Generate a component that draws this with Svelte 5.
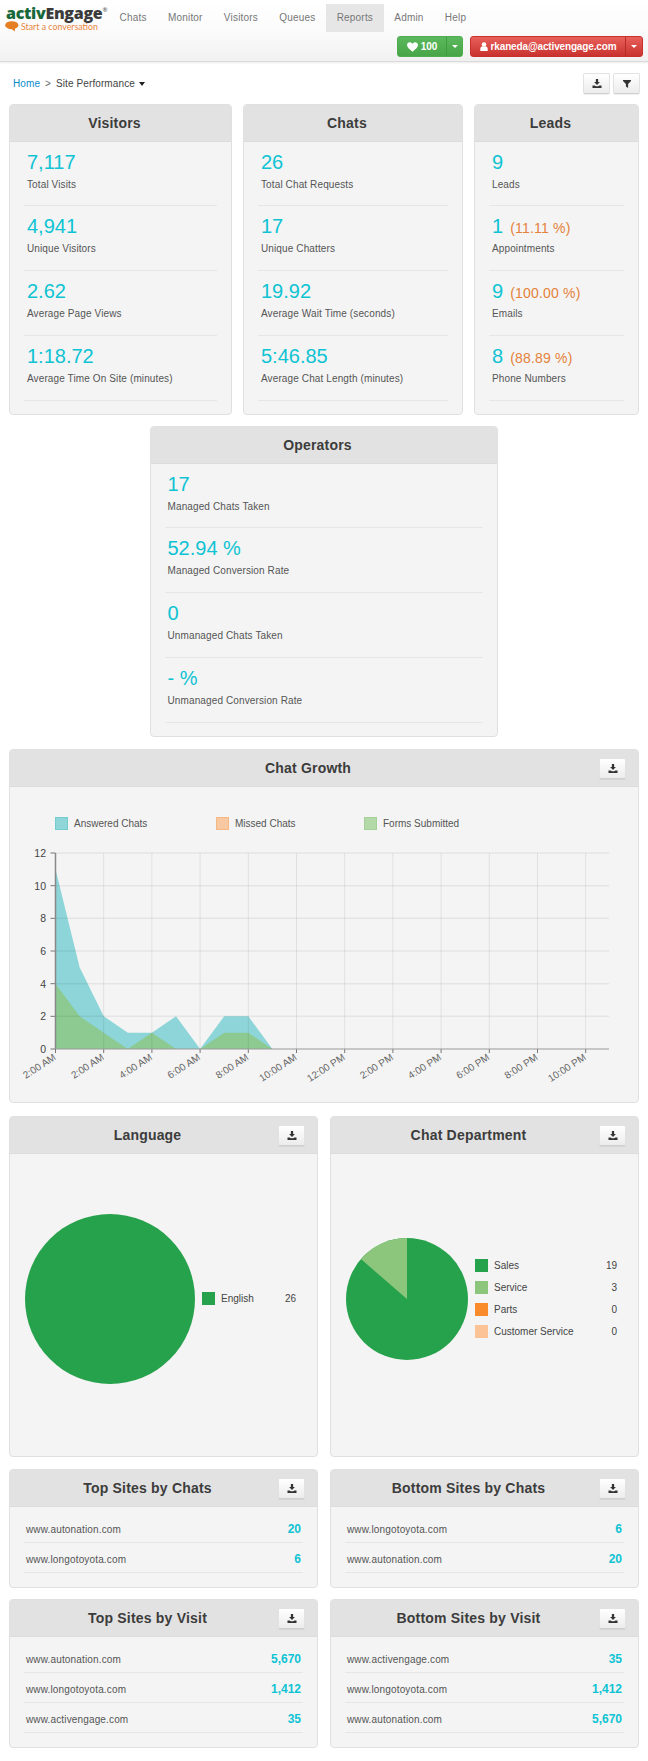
<script>
  const nav = ['Chats', 'Monitor', 'Visitors', 'Queues', 'Reports', 'Admin', 'Help'];

  const visitors = [
    { value: '7,117', label: 'Total Visits' },
    { value: '4,941', label: 'Unique Visitors' },
    { value: '2.62', label: 'Average Page Views' },
    { value: '1:18.72', label: 'Average Time On Site (minutes)' }
  ];
  const chats = [
    { value: '26', label: 'Total Chat Requests' },
    { value: '17', label: 'Unique Chatters' },
    { value: '19.92', label: 'Average Wait Time (seconds)' },
    { value: '5:46.85', label: 'Average Chat Length (minutes)' }
  ];
  const leads = [
    { value: '9', label: 'Leads' },
    { value: '1', pct: '(11.11 %)', label: 'Appointments' },
    { value: '9', pct: '(100.00 %)', label: 'Emails' },
    { value: '8', pct: '(88.89 %)', label: 'Phone Numbers' }
  ];
  const operators = [
    { value: '17', label: 'Managed Chats Taken' },
    { value: '52.94 %', label: 'Managed Conversion Rate' },
    { value: '0', label: 'Unmanaged Chats Taken' },
    { value: '- %', label: 'Unmanaged Conversion Rate' }
  ];
  const summary = [
    { title: 'Visitors', cls: 'w-visitors', items: visitors },
    { title: 'Chats', cls: 'w-chats', items: chats },
    { title: 'Leads', cls: 'w-leads', items: leads }
  ];

  const siteCards = [
    [
      { title: 'Top Sites by Chats', rows: [['www.autonation.com', '20'], ['www.longotoyota.com', '6']] },
      { title: 'Bottom Sites by Chats', rows: [['www.longotoyota.com', '6'], ['www.autonation.com', '20']] }
    ],
    [
      { title: 'Top Sites by Visit', rows: [['www.autonation.com', '5,670'], ['www.longotoyota.com', '1,412'], ['www.activengage.com', '35']] },
      { title: 'Bottom Sites by Visit', rows: [['www.activengage.com', '35'], ['www.longotoyota.com', '1,412'], ['www.autonation.com', '5,670']] }
    ]
  ];

  const departments = [
    { name: 'Sales', count: 19, color: '#27a24c' },
    { name: 'Service', count: 3, color: '#8cc67c' },
    { name: 'Parts', count: 0, color: '#f98b2c' },
    { name: 'Customer Service', count: 0, color: '#fcc496' }
  ];

  // chart geometry, in page coordinates
  const plot = { left: 55.5, right: 609, top: 853, bottom: 1049 };
  const stepX = 48.2;
  const stepY = (plot.bottom - plot.top) / 12;
  const yTicks = [0, 2, 4, 6, 8, 10, 12];
  const xLabels = ['2:00 AM', '2:00 AM', '4:00 AM', '6:00 AM', '8:00 AM', '10:00 AM', '12:00 PM', '2:00 PM', '4:00 PM', '6:00 PM', '8:00 PM', '10:00 PM'];
  const answered = [11, 5, 2, 1, 1, 2, 0, 2, 2, 0];
  const forms = [4, 2, 1, 0, 1, 0, 0, 1, 1, 0];

  const chartLegend = [
    { name: 'Answered Chats', x: 55, color: '#8fd6d8', edge: '#74ccd0' },
    { name: 'Missed Chats', x: 216, color: '#f8c8a0', edge: '#f6b883' },
    { name: 'Forms Submitted', x: 364, color: '#b3d9a9', edge: '#a3d198' }
  ];

  function area(data) {
    const pts = data.map((v, i) => `${plot.left + (i * stepX) / 2},${plot.bottom - v * stepY}`);
    return `${plot.left},${plot.bottom} ${pts.join(' ')}`;
  }
</script>

{#snippet downloadIcon()}
  <svg width="10" height="9" viewBox="0 0 13 12" aria-hidden="true">
    <path d="M5 0h3v4h2.400L6.500 8 2.600 4H5z" fill="#333" />
    <path d="M0.500 8.500h2.800l1.600 1.300h3.200l1.600-1.300h2.800V12H0.500z" fill="#333" />
  </svg>
{/snippet}

{#snippet cardHead(title, withButton)}
  <div class="card-head">
    <h2 class:shifted={withButton}>{title}</h2>
    {#if withButton}
      <button class="tool" aria-label="Download">{@render downloadIcon()}</button>
    {/if}
  </div>
{/snippet}

{#snippet statList(items)}
  <ul class="stats">
    {#each items as item}
      <li>
        <div class="stat-value">
          {item.value}{#if item.pct}<span class="pct">{item.pct}</span>{/if}
        </div>
        <div class="stat-label">{item.label}</div>
      </li>
    {/each}
  </ul>
{/snippet}

<header class="topbar">
  <div class="logo">
    <div class="logo-name"><span class="activ">activ</span>Engage<sup>®</sup></div>
    <div class="logo-tag">
      <svg width="14" height="11" viewBox="0 0 14 11" aria-hidden="true">
        <ellipse cx="6.800" cy="4.200" rx="6.600" ry="4" fill="#e67e22" />
        <path d="M6 7.500l4 0 0 3z" fill="#e67e22" />
      </svg>
      <span>Start a conversation</span>
    </div>
  </div>
  <div class="topbar-right">
    <nav>
      {#each nav as item}
        <span class="nav-item" class:active={item === 'Reports'}>{item}</span>
      {/each}
    </nav>
    <div class="account">
      <div class="split green">
        <span class="split-main">
          <svg width="11" height="10" viewBox="0 0 15 13" aria-hidden="true">
            <path d="M7.500 13C3 9.200 0 6.800 0 3.800 0 1.600 1.700 0 3.800 0c1.500 0 2.900.8 3.700 2.100C8.300.8 9.700 0 11.200 0 13.300 0 15 1.600 15 3.800c0 3-3 5.400-7.500 9.200z" fill="#fff" />
          </svg>
          100
        </span>
        <span class="split-caret"></span>
      </div>
      <div class="split red">
        <span class="split-main">
          <svg width="8" height="9" viewBox="0 0 9 11" aria-hidden="true">
            <circle cx="4.500" cy="3" r="2.800" fill="#fff" />
            <path d="M0 11V8.300C0 6.500 1.500 5.500 2.800 5.300c1 .7 2.400.7 3.400 0C7.500 5.500 9 6.500 9 8.300V11z" fill="#fff" />
          </svg>
          rkaneda@activengage.com
        </span>
        <span class="split-caret"></span>
      </div>
    </div>
  </div>
</header>

<main>
  <div class="toolbar">
    <div class="crumbs">
      <span class="home">Home</span><span class="sep">&gt;</span><span>Site Performance</span><span class="crumb-caret"></span>
    </div>
    <div class="tools">
      <button class="tool" aria-label="Download">{@render downloadIcon()}</button>
      <button class="tool narrow" aria-label="Filter">
        <svg width="8" height="8" viewBox="0 0 11 11" aria-hidden="true">
          <path d="M0 0h11v1.500L7 5.500V11L4 9V5.500L0 1.500z" fill="#333" />
        </svg>
      </button>
    </div>
  </div>

  <div class="row">
    {#each summary as card}
      <section class="card {card.cls}">
        {@render cardHead(card.title, false)}
        {@render statList(card.items)}
      </section>
    {/each}
  </div>

  <div class="row center">
    <section class="card w-operators">
      {@render cardHead('Operators', false)}
      {@render statList(operators)}
    </section>
  </div>

  <section class="card growth">
    {@render cardHead('Chat Growth', true)}
    <svg class="chart" width="628" height="314" viewBox="10 787 628 314">
      {#each chartLegend as l}
        <rect x={l.x + 0.5} y="817.500" width="12" height="12" fill={l.color} stroke={l.edge} />
        <text class="legend-text" x={l.x + 19} y="827">{l.name}</text>
      {/each}

      <polygon points={area(answered)} fill="rgb(15,175,182)" fill-opacity="0.45" />
      <polygon points={area(forms)} fill="rgb(140,195,100)" fill-opacity="0.6" />

      {#each yTicks as t}
        <line x1={plot.left} x2={plot.right} y1={plot.bottom - t * stepY} y2={plot.bottom - t * stepY} stroke="#000" stroke-opacity={t === 0 ? 0 : 0.06} stroke-width="1.500" />
        <line x1={plot.left - 5} x2={plot.left} y1={plot.bottom - t * stepY} y2={plot.bottom - t * stepY} stroke="#777" />
        <text class="axis-text" x="46" y={plot.bottom - t * stepY + 4} text-anchor="end">{t}</text>
      {/each}

      {#each xLabels as label, i}
        {@const x = plot.left + i * stepX}
        {#if i > 0}
          <line x1={x} x2={x} y1={plot.top} y2={plot.bottom} stroke="#000" stroke-opacity="0.08" />
        {/if}
        <line x1={x} x2={x} y1={plot.bottom} y2={plot.bottom + 4} stroke="#777" />
        <text class="axis-text small" transform="translate({x + 1} {plot.bottom + 10}) rotate(-33)" text-anchor="end">{label}</text>
      {/each}

      <line x1={plot.left} x2={plot.left} y1={plot.top} y2={plot.bottom} stroke="#888" stroke-width="1.500" />
      <line x1={plot.left} x2={plot.right} y1={plot.bottom} y2={plot.bottom} stroke="#999" />
    </svg>
  </section>

  <div class="row pies">
    <section class="card half">
      {@render cardHead('Language', true)}
      <div class="pie-body">
        <svg class="pie-big" width="170" height="170" viewBox="0 0 170 170">
          <circle cx="85" cy="85" r="85" fill="#27a24c" />
        </svg>
        <div class="pie-legend">
          <div class="legend-row">
            <span class="swatch sales"></span>
            <span class="legend-name">English</span>
            <span>26</span>
          </div>
        </div>
      </div>
    </section>
    <section class="card half">
      {@render cardHead('Chat Department', true)}
      <div class="pie-body">
        <svg class="pie-small" width="122" height="122" viewBox="-61 -61 122 122">
          <circle r="61" fill="#27a24c" />
          <path d="M0 0V-61A61 61 0 0 0 -46.100 -39.950z" fill="#8cc67c" />
        </svg>
        <div class="pie-legend">
          {#each departments as d}
            <div class="legend-row">
              <span class="swatch" style="background: {d.color}"></span>
              <span class="legend-name">{d.name}</span>
              <span>{d.count}</span>
            </div>
          {/each}
        </div>
      </div>
    </section>
  </div>

  {#each siteCards as pair}
    <div class="row sites">
      {#each pair as card}
        <section class="card half">
          {@render cardHead(card.title, true)}
          <ul class="site-list">
            {#each card.rows as [site, count]}
              <li><span>{site}</span><b>{count}</b></li>
            {/each}
          </ul>
        </section>
      {/each}
    </div>
  {/each}
</main>

<style>
  :global(body) {
    margin: 0;
    background: #fff;
    font-family: 'Liberation Sans', Arial, sans-serif;
    font-size: 10px;
    color: #444;
  }

  .topbar {
    height: 62px;
    box-sizing: border-box;
    display: flex;
    background: linear-gradient(180deg, #fff 0%, #fbfbfb 50%, #f1f1f1 100%);
    border-bottom: 1px solid #d9d9d9;
    box-shadow: 0 1px 2px rgba(0, 0, 0, 0.08);
  }

  .logo {
    width: 109px;
    flex-shrink: 0;
    padding: 4px 0 0 5px;
    box-sizing: border-box;
  }

  .logo-name {
    font-family: 'Open Sans', sans-serif;
    font-weight: 800;
    font-size: 16px;
    line-height: 19px;
    letter-spacing: -0.300px;
    color: #3b3b3b;
    white-space: nowrap;
    padding-left: 1px;
  }

  .logo-name .activ {
    color: #17693a;
  }

  .logo-name sup {
    font-size: 6px;
    font-weight: 400;
    line-height: 0;
    vertical-align: 7px;
  }

  .logo-tag {
    display: flex;
    align-items: flex-start;
    gap: 2px;
    font-family: Lato, sans-serif;
    font-size: 8.800px;
    line-height: 11px;
    color: #e8853c;
    white-space: nowrap;
    margin-top: -2px;
  }

  .logo-tag svg {
    flex-shrink: 0;
  }

  .topbar-right {
    flex: 1;
    display: flex;
    flex-direction: column;
  }

  nav {
    display: flex;
    padding-top: 4px;
    height: 28px;
  }

  .nav-item {
    padding: 0 10.600px;
    line-height: 28px;
    color: #777;
    letter-spacing: 0.200px;
  }

  .nav-item.active {
    background: #e6e6e6;
  }

  .account {
    display: flex;
    justify-content: flex-end;
    gap: 7px;
    padding: 4px 5px 0 0;
  }

  .split {
    display: flex;
    height: 21px;
    border-radius: 3px;
    color: #fff;
    font-weight: 700;
    font-size: 10px;
    line-height: 19px;
  }

  .split-main {
    display: flex;
    align-items: center;
    justify-content: center;
    gap: 3px;
    letter-spacing: -0.150px;
  }

  .split-caret {
    display: flex;
    align-items: center;
    justify-content: center;
    position: relative;
  }

  .split-caret::after {
    content: '';
    border-left: 3px solid transparent;
    border-right: 3px solid transparent;
    border-top: 3px solid #fff;
  }

  .green {
    background: linear-gradient(180deg, #5cb85c, #47a447);
    border: 1px solid #4cae4c;
    box-sizing: border-box;
    width: 66px;
  }

  .green .split-main {
    width: 48px;
    letter-spacing: 0;
  }

  .green .split-caret {
    flex: 1;
    border-left: 1px solid #409a40;
  }

  .red {
    background: linear-gradient(180deg, #e8605a, #c9322e);
    border: 1px solid #c9302c;
    box-sizing: border-box;
    width: 173px;
  }

  .red .split-main {
    width: 154px;
  }

  .red .split-caret {
    flex: 1;
    border-left: 1px solid #b52b27;
  }

  main {
    padding: 0 9px 1px;
  }

  .toolbar {
    height: 42px;
    display: flex;
    align-items: flex-start;
    justify-content: space-between;
  }

  .crumbs {
    display: flex;
    align-items: center;
    padding: 15px 0 0 4px;
    line-height: 13px;
    color: #444;
    letter-spacing: 0.100px;
  }

  .home {
    color: #0a8acb;
  }

  .sep {
    margin: 0 5px;
    color: #666;
  }

  .crumb-caret {
    margin-left: 4px;
    border-left: 3px solid transparent;
    border-right: 3px solid transparent;
    border-top: 4px solid #222;
  }

  .tools {
    display: flex;
    gap: 3px;
    padding: 11px 0 0;
    margin-right: -1px;
  }

  .tool {
    width: 27px;
    height: 21px;
    flex-shrink: 0;
    padding: 0;
    display: flex;
    align-items: center;
    justify-content: center;
    background: linear-gradient(180deg, #fff, #ececec);
    border: 1px solid #e2e2e2;
    border-bottom-color: #cfcfcf;
    border-radius: 2px;
    box-shadow: 0 1px 1px rgba(0, 0, 0, 0.06);
  }

  .row {
    display: flex;
    gap: 11px;
    margin-bottom: 11px;
  }

  .row.center {
    justify-content: center;
    margin-bottom: 12px;
  }

  .row.pies,
  .row.sites {
    gap: 12px;
  }

  .row.pies {
    margin-bottom: 12px;
  }

  .card {
    background: #f4f4f4;
    border: 1px solid #e0e0e0;
    border-radius: 4px;
    box-sizing: border-box;
    overflow: hidden;
  }

  .w-visitors {
    width: 223px;
  }

  .w-chats {
    width: 220px;
  }

  .w-leads {
    width: 165px;
  }

  .w-operators {
    width: 348px;
    margin-left: -1px;
  }

  .half {
    width: 309px;
  }

  .card-head {
    height: 37px;
    display: flex;
    align-items: center;
    background: #e2e2e2;
    border-bottom: 1px solid #dcdcdc;
    box-sizing: border-box;
    padding-right: 12px;
  }

  .card-head h2 {
    flex: 1;
    margin: 0;
    text-align: center;
    font-size: 14px;
    line-height: 20px;
    font-weight: 700;
    color: #3c3c3c;
    letter-spacing: 0.200px;
  }

  .card-head h2.shifted {
    margin-right: -7px;
  }

  .stats {
    list-style: none;
    margin: 0;
    padding: 0 14px 13px;
  }

  .stats li {
    height: 65px;
    box-sizing: border-box;
    padding: 8px 0 0 3px;
    border-bottom: 1px solid #e6e6e6;
  }

  .stats li:first-child {
    height: 64px;
  }

  .stat-value {
    height: 25px;
    font-size: 20px;
    line-height: 25px;
    color: #0ec3d3;
    white-space: nowrap;
  }

  .pct {
    font-size: 14px;
    color: #e58239;
    margin-left: 7px;
    letter-spacing: 0.200px;
  }

  .stat-label {
    line-height: 14px;
    margin-top: 3px;
    color: #555;
    white-space: nowrap;
    letter-spacing: 0.120px;
  }

  .growth {
    height: 354px;
    margin-bottom: 13px;
  }

  .chart {
    display: block;
  }

  .legend-text {
    font-size: 10px;
    fill: #555;
  }

  .axis-text {
    font-size: 10.500px;
    fill: #444;
  }

  .axis-text.small {
    font-size: 10px;
    fill: #666;
  }

  .pies .half {
    height: 341px;
  }

  .pie-body {
    height: 302px;
    display: flex;
    align-items: center;
    padding: 0 21px 13px 15px;
    box-sizing: border-box;
  }

  .pie-big,
  .pie-small {
    flex-shrink: 0;
  }

  .pie-legend {
    flex: 1;
    margin-left: 7px;
  }

  .legend-row {
    display: flex;
    align-items: center;
    height: 22.300px;
    color: #444;
  }

  .legend-name {
    flex: 1;
    margin-left: 6px;
  }

  .swatch {
    width: 13px;
    height: 13px;
    flex-shrink: 0;
  }

  .swatch.sales {
    background: #27a24c;
  }

  .site-list {
    list-style: none;
    margin: 0;
    padding: 6px 14px 14px;
  }

  .site-list li {
    height: 30px;
    box-sizing: border-box;
    display: flex;
    align-items: center;
    justify-content: space-between;
    padding: 3px 2px 0;
    border-bottom: 1px solid #e6e6e6;
    color: #555;
    letter-spacing: 0.150px;
  }

  .site-list b {
    color: #0ec3d3;
    font-size: 12px;
    letter-spacing: 0;
  }
</style>
